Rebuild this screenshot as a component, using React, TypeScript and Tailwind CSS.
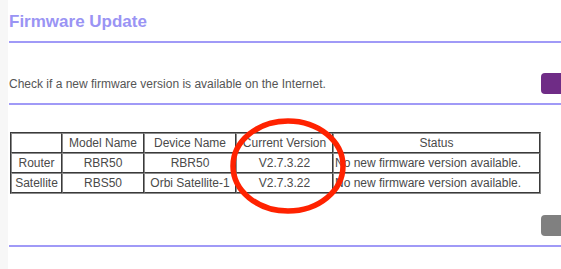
const rows = [
  { kind: "Router", model: "RBR50", device: "RBR50", version: "V2.7.3.22" },
  { kind: "Satellite", model: "RBS50", device: "Orbi Satellite-1", version: "V2.7.3.22" },
];

const cell = "border border-[#8a8a8a] border-r-[#3a3a3a] border-b-[#3a3a3a] h-[20px] p-0 font-normal";

export default function App() {
  return (
    <div className="flex h-[269px] w-[561px] overflow-hidden bg-white font-['Liberation_Sans',Arial,sans-serif]">
      <div className="w-[8px] shrink-0 bg-[#f7f7f7]" />
      <div className="relative w-[632px] shrink-0 pl-[1px]">
        <h1 className="mt-[12px] h-[20px] text-[17px] leading-[20px] font-bold text-[#9a94f4]">
          Firmware Update
        </h1>
        <div className="mt-[9px] h-[2px] bg-[#a09af7]" />

        <div className="mt-[30px] flex h-[21px] items-center justify-between">
          <p className="text-[12px] leading-[16px] text-[#555]">
            Check if a new firmware version is available on the Internet.
          </p>
          <button className="h-[21px] w-[99px] rounded-[4px] bg-[#6f2c86]" />
        </div>
        <div className="mt-[9px] h-[2px] bg-[#a09af7]" />

        <table className="ml-[1px] mt-[27px] table-fixed border-separate border-spacing-0 border border-[#3a3a3a] border-r-[#8a8a8a] border-b-[#8a8a8a] text-[12px] leading-[14px] text-[#4a4a4a]">
          <thead>
            <tr>
              <th className={`${cell} w-[51px]`} />
              <th className={`${cell} w-[82px]`}>Model Name</th>
              <th className={`${cell} w-[92px]`}>Device Name</th>
              <th className={`${cell} w-[97px]`}>Current Version</th>
              <th className={`${cell} w-[207px]`}>Status</th>
            </tr>
          </thead>
          <tbody>
            {rows.map((r) => (
              <tr key={r.kind}>
                <td className={`${cell} text-center`}>{r.kind}</td>
                <td className={`${cell} text-center`}>{r.model}</td>
                <td className={`${cell} text-center`}>{r.device}</td>
                <td className={`${cell} text-center`}>{r.version}</td>
                <td className={`${cell} pl-[1px] text-left`}>No new firmware version available.</td>
              </tr>
            ))}
          </tbody>
        </table>

        <div className="mt-[21px] flex justify-end">
          <button className="h-[21px] w-[99px] rounded-[4px] bg-[#808080]" />
        </div>
        <div className="mt-[9px] h-[2px] bg-[#a09af7]" />

        {/* red annotation circle drawn over the table */}
        <svg
          className="pointer-events-none absolute left-[215px] top-[108px]"
          width="134"
          height="116"
          viewBox="0 0 134 116"
        >
          <ellipse
            cx="65"
            cy="58"
            rx="55"
            ry="45"
            fill="none"
            stroke="#ff2200"
            strokeWidth="5.5"
          />
        </svg>
      </div>
    </div>
  );
}
